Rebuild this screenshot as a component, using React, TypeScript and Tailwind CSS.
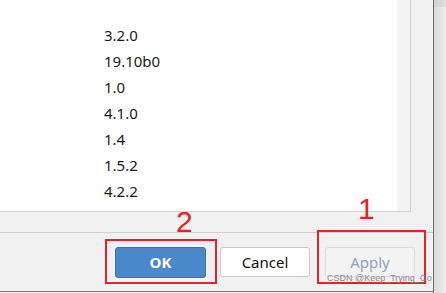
import React from "react";

const versions = ["3.2.0", "19.10b0", "1.0", "4.1.0", "1.4", "1.5.2", "4.2.2"];

export default function App() {
  return (
    <div
      className="relative flex h-[293px] w-[446px] overflow-hidden bg-[#f0f0f0]"
      style={{ fontFamily: '"Noto Sans", "Open Sans", sans-serif' }}
    >
      {/* dialog */}
      <div className="flex h-full w-[433px] flex-col bg-[#f1f1f1]">
        <div className="flex h-[212px]">
          <div className="flex h-[212px] w-[411px] border-b border-r border-[#d2d2d2]">
            <div className="w-[397px] bg-white pl-[104px] pt-[22px] text-[15px] leading-[26px] text-[#1a1a1a]">
              {versions.map((v) => (
                <div key={v}>{v}</div>
              ))}
            </div>
            <div className="w-[13px] bg-[#f4f4f4]" />
          </div>
        </div>
        <div className="h-[20px]" />
        <div className="h-px bg-[#cfcfcf]" />
        <div className="flex h-[58px] items-start justify-end pr-[18px] pt-[14px]">
          <button className="flex h-[31px] w-[91px] items-center justify-center rounded-[3px] border border-[#3d72ad] bg-[#4a88c9] text-[15px] font-bold text-white">
            OK
          </button>
          <button className="ml-[14px] flex h-[30px] w-[90px] items-center justify-center rounded-[3px] border border-[#c9c9c9] bg-white text-[15px] text-[#111]">
            Cancel
          </button>
          <button className="ml-[15px] flex h-[30px] w-[90px] items-center justify-center rounded-[3px] border border-[#dcdcdc] bg-[#f3f3f3] text-[15px] text-[#93a2b6]">
            Apply
          </button>
        </div>
        <div className="h-px bg-[#7a7a7a]" />
        <div className="flex-1 bg-[#f4f4f4]" />
      </div>
      {/* window edge + shadow */}
      <div className="h-full w-px bg-[#6e6e6e]" />
      <div className="flex h-full flex-1 flex-col">
        <div className="h-[7px] bg-gradient-to-r from-[#cfcfcf] to-[#e2e2e2]" />
        <div className="flex-1 bg-gradient-to-r from-[#dadada] to-[#efefef]" />
      </div>

      {/* annotations */}
      <div className="absolute left-[105px] top-[239px] h-[45px] w-[112px] border-2 border-[#e8202a]" />
      <div className="absolute left-[317px] top-[230px] h-[54px] w-[109px] border-2 border-[#e8202a]" />
      <div
        className="absolute left-[176px] top-[207px] text-[30px] leading-[30px] text-[#e8202a]"
        style={{ fontFamily: '"Liberation Sans", Arial, sans-serif' }}
      >
        2
      </div>
      <div
        className="absolute left-[358px] top-[194px] text-[30px] leading-[30px] text-[#e8202a]"
        style={{ fontFamily: '"Liberation Sans", Arial, sans-serif' }}
      >
        1
      </div>
      <div
        className="absolute left-[327px] top-[273px] text-[9px] leading-[11px] text-[#8a8a8a]"
        style={{ fontFamily: '"Liberation Sans", Arial, sans-serif' }}
      >
        CSDN @Keep_Trying_Go
      </div>
    </div>
  );
}
